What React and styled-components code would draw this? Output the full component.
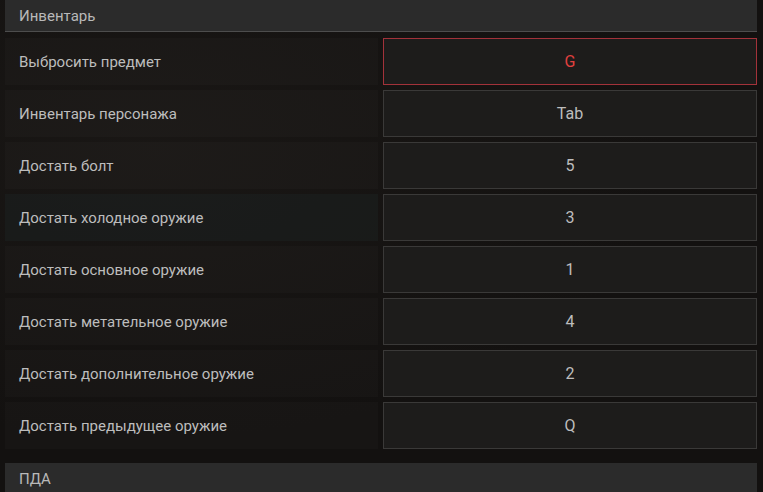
import React from "react";
import styled, { createGlobalStyle } from "styled-components";

const GlobalStyle = createGlobalStyle`
  html, body {
    margin: 0;
    padding: 0;
    background: #131110;
    overflow: hidden;
  }
  * {
    box-sizing: border-box;
  }
`;

const inventoryBinds = [
  { label: "Выбросить предмет", key: "G", active: true },
  { label: "Инвентарь персонажа", key: "Tab" },
  { label: "Достать болт", key: "5" },
  { label: "Достать холодное оружие", key: "3", hover: true },
  { label: "Достать основное оружие", key: "1" },
  { label: "Достать метательное оружие", key: "4" },
  { label: "Достать дополнительное оружие", key: "2" },
  { label: "Достать предыдущее оружие", key: "Q" },
];

export default function App() {
  return (
    <>
      <GlobalStyle />
      <Page>
        <Section>
          <SectionHeader>Инвентарь</SectionHeader>
          <BindList>
            {inventoryBinds.map((bind) => (
              <BindRow key={bind.label}>
                <BindLabel hover={bind.hover}>{bind.label}</BindLabel>
                <KeyBox active={bind.active}>{bind.key}</KeyBox>
              </BindRow>
            ))}
          </BindList>
        </Section>
        <Section>
          <SectionHeader>ПДА</SectionHeader>
        </Section>
      </Page>
    </>
  );
}

const Page = styled.div`
  width: 763px;
  height: 492px;
  overflow: hidden;
  padding: 0 6px 0 5px;
  background: radial-gradient(
      ellipse at 20% 30%,
      rgba(40, 36, 32, 0.3),
      rgba(0, 0, 0, 0) 60%
    ),
    #131110;
  font-family: Roboto, "Liberation Sans", sans-serif;
`;

const Section = styled.section`
  display: flex;
  flex-direction: column;
`;

const SectionHeader = styled.div`
  height: 32px;
  display: flex;
  align-items: center;
  padding: 0 14px 0;
  background: #2b2b2b;
  border-bottom: 1px solid #4d4d4d;
  color: #b9b9b9;
  font-size: 15px;
`;

const BindList = styled.div`
  display: flex;
  flex-direction: column;
  gap: 5px;
  padding: 6px 0 14px;
`;

const BindRow = styled.div`
  display: grid;
  grid-template-columns: 373px 1fr;
  gap: 5px;
  height: 47px;
`;

const BindLabel = styled.div`
  display: flex;
  align-items: center;
  padding-left: 14px;
  background: ${(p) =>
    p.hover ? "rgba(30, 38, 38, 0.4)" : "rgba(255, 255, 255, 0.018)"};
  color: #bdbdbd;
  font-size: 15px;
`;

const KeyBox = styled.div`
  display: flex;
  align-items: center;
  justify-content: center;
  background: #1d1c1b;
  border: 1px solid ${(p) => (p.active ? "#a3323a" : "#3a3938")};
  color: ${(p) => (p.active ? "#e0403f" : "#bdbdbd")};
  font-size: 16px;
`;
